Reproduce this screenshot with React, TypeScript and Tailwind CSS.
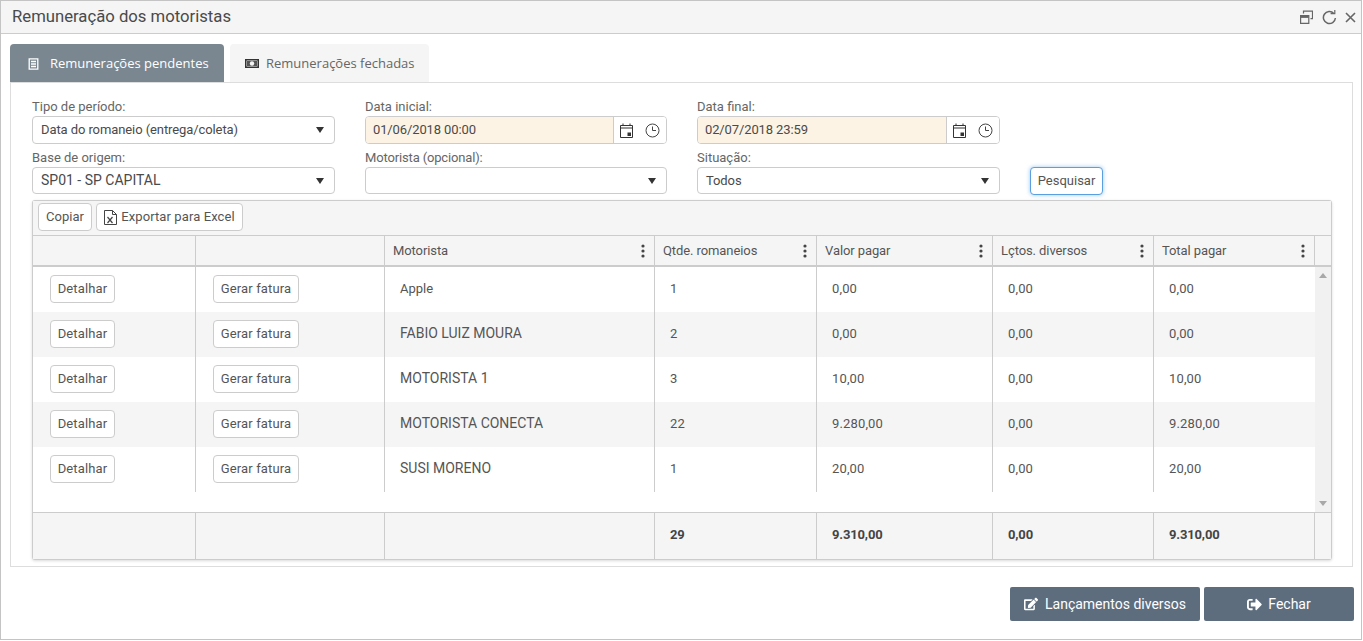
import { FaEdit, FaSignOutAlt } from "react-icons/fa";

const cols = "grid grid-cols-[163px_189px_270px_162px_176px_161px_161px_16px]";
const rowCols = "grid grid-cols-[163px_189px_270px_162px_176px_161px_161px]";
const font = { fontFamily: "Roboto, sans-serif" };

const rows = [
  ["Apple", "1", "0,00", "0,00", "0,00"],
  ["FABIO LUIZ MOURA", "2", "0,00", "0,00", "0,00"],
  ["MOTORISTA 1", "3", "10,00", "0,00", "10,00"],
  ["MOTORISTA CONECTA", "22", "9.280,00", "0,00", "9.280,00"],
  ["SUSI MORENO", "1", "20,00", "0,00", "20,00"],
];

function Arrow() {
  return (
    <svg width="8" height="6" viewBox="0 0 8 6" className="shrink-0">
      <path d="M0 0h8L4 6z" fill="#333" />
    </svg>
  );
}

function Field({ label, w, value, h, track = "text-[13px] tracking-[-0.09px]", labelTrack = "" }: { label: string; w: string; value: string; h: string; track?: string; labelTrack?: string }) {
  return (
    <div className={w}>
      <div className={`h-[18px] text-[13px] leading-[17px] text-[#666] ${labelTrack}`}>{label}</div>
      <div className={`flex ${h} items-center justify-between rounded-[4px] border border-[#ccc] bg-white pl-2 pr-[10px] ${track} text-[#4a4a4a]`}>
        <span>{value}</span>
        <Arrow />
      </div>
    </div>
  );
}

function DateField({ label, value, w }: { label: string; value: string; w: string }) {
  return (
    <div className={w}>
      <div className="h-[18px] text-[13px] leading-[17px] text-[#666]">{label}</div>
      <div className="flex h-[28px] overflow-hidden rounded-[4px] border border-[#ccc] text-[13px] tracking-[-0.12px] text-[#4a4a4a]">
        <div className="flex flex-1 items-center bg-[#fdf3e4] pl-[7px]">{value}</div>
        <div className="flex w-[53px] items-center gap-[11px] border-l border-[#ccc] bg-white pl-[5px]">
          <svg width="15" height="15" viewBox="0 0 15 15" fill="none" stroke="#333">
            <path d="M1.5 2.5h12v12h-12zM1.5 5h12" />
            <path d="M4 .5v2.5M11 .5v2.5" />
            <rect x="8.5" y="9.5" width="3.5" height="3.5" fill="#333" stroke="none" />
          </svg>
          <svg width="15" height="15" viewBox="0 0 15 15" fill="none" stroke="#444" className="mt-[1px]">
            <circle cx="7.5" cy="7.5" r="6.5" />
            <path d="M7.5 3.5v4h3.5" />
          </svg>
        </div>
      </div>
    </div>
  );
}

function SmallButton({ children, className = "" }: { children: React.ReactNode; className?: string }) {
  return (
    <div className={`flex items-center justify-center rounded-[4px] border border-[#ccc] bg-white text-[13px] text-[#555] ${className}`}>
      {children}
    </div>
  );
}

function HeaderCell({ label }: { label: string }) {
  return (
    <div className="flex items-center justify-between border-r border-[#ccc] pl-2 pr-[9px] text-[13px] tracking-[-0.09px] text-[#555]">
      <span>{label}</span>
      <svg width="4" height="14" viewBox="0 0 4 14" fill="#444">
        <circle cx="2" cy="2" r="1.6" />
        <circle cx="2" cy="7" r="1.6" />
        <circle cx="2" cy="12" r="1.6" />
      </svg>
    </div>
  );
}

export default function App() {
  return (
    <div className="flex h-[640px] w-[1362px] flex-col border border-[#c4c4c4] bg-white" style={font}>
      <div className="flex h-[33px] shrink-0 items-center justify-between border-b border-[#ccc] bg-[#f5f5f5] pl-[11px] pr-[5px]">
        <span className="text-[16.7px] text-[#4a4a4a]">Remuneração dos motoristas</span>
        <div className="flex items-center gap-[9px]">
          <svg width="13" height="14" viewBox="0 0 13 14" fill="none" stroke="#666" strokeWidth="1.2">
            <path d="M.6 5.6h8.2v7.8H.6z" />
            <path d="M.6 6.9h8.2" strokeWidth="2" />
            <path d="M3.5 3.4V1.1h9v7.6h-2" />
          </svg>
          <svg width="15" height="16" viewBox="0 0 15 16" fill="none" stroke="#666" strokeWidth="1.5">
            <path d="M11.8 4.4A6 6 0 1 0 13.4 9" />
            <path d="M8.6 4.6h4.2V1" fill="none" strokeWidth="1.2" />
          </svg>
          <svg width="11" height="11" viewBox="0 0 11 11" stroke="#666" strokeWidth="1.6" className="-ml-[1px]">
            <path d="M1 1l9 9M10 1l-9 9" />
          </svg>
        </div>
      </div>

      <div className="flex flex-1 flex-col pl-[9px] pr-[8px] pt-[10px]">
        <div className="flex h-[38px] gap-[6px]" style={{ fontFamily: '"Open Sans", sans-serif' }}>
          <div className="flex w-[214px] items-center gap-[11px] rounded-t-[4px] bg-[#7a8791] pl-[18px] pt-[1px] text-[13px] text-white">
            <svg width="11" height="12" viewBox="0 0 11 12" fill="none" stroke="#fff" strokeWidth="1.3">
              <path d="M1.2.8h8.6v10.4H1.2z" />
              <path d="M3 3.5h5M3 6h5M3 8.5h5" />
            </svg>
            <span>Remunerações pendentes</span>
          </div>
          <div className="flex w-[199px] items-center gap-[7px] rounded-t-[4px] bg-[#f5f5f5] pl-[15px] pt-[1px] text-[13px] text-[#666]">
            <svg width="14" height="9" viewBox="0 0 14 9" fill="none" stroke="#333">
              <rect x=".75" y=".75" width="12.5" height="7.5" strokeWidth="1.5" />
              <rect x="2" y="2" width="10" height="5" fill="#555" stroke="none" />
              <circle cx="7" cy="4.5" r="2.2" fill="#f5f5f5" stroke="none" />
            </svg>
            <span>Remunerações fechadas</span>
          </div>
        </div>

        <div className="flex h-[485px] flex-col border border-[#ddd] px-[21px] pt-[15px]">
          <div className="flex">
            <Field label="Tipo de período:" w="w-[303px]" value="Data do romaneio (entrega/coleta)" h="h-[28px]" />
            <DateField label="Data inicial:" value="01/06/2018 00:00" w="ml-[30px] w-[302px]" />
            <DateField label="Data final:" value="02/07/2018 23:59" w="ml-[30px] w-[303px]" />
          </div>
          <div className="mt-[5px] flex items-start">
            <Field label="Base de origem:" w="w-[303px]" value="SP01 - SP CAPITAL" h="h-[27px]" track="text-[14px] tracking-normal" />
            <Field label="Motorista (opcional):" w="ml-[30px] w-[302px]" value="" h="h-[27px]" labelTrack="tracking-[-0.15px]" />
            <Field label="Situação:" w="ml-[30px] w-[303px]" value="Todos" h="h-[27px]" />
            <div className="ml-[30px] mt-[18px] flex h-[28px] w-[73px] items-center justify-center rounded-[4px] border border-[#5a9fe0] bg-white text-[13px] text-[#555] shadow-[0_0_4px_rgba(90,160,225,0.6)]">
              Pesquisar
            </div>
          </div>

          <div className="mt-[5px] h-[360px] w-[1300px] rounded-[3px] border border-b-2 border-[#ccc] shadow-[0_1px_3px_rgba(0,0,0,0.15)]">
            <div className="flex h-[35px] items-start gap-[4px] border-b border-[#ccc] bg-[#f5f5f5] pl-[5px] pt-[2px]">
              <SmallButton className="h-[28px] w-[54px]">Copiar</SmallButton>
              <SmallButton className="h-[28px] w-[147px] gap-[4px] tracking-[0.1px]">
                <svg width="13" height="15" viewBox="0 0 13 15" fill="none" stroke="#444">
                  <path d="M.5.5h8l4 4v10H.5zM8.5.5v4h4" />
                  <path d="M3.5 7l5 6M8.5 7l-5 6" strokeWidth="1.2" />
                </svg>
                <span>Exportar para Excel</span>
              </SmallButton>
            </div>

            <div className={`${cols} h-[31px] border-b-[2px] border-[#ccc] bg-[#f5f5f5]`}>
              <div className="border-r border-[#ccc]" />
              <div className="border-r border-[#ccc]" />
              <HeaderCell label="Motorista" />
              <HeaderCell label="Qtde. romaneios" />
              <HeaderCell label="Valor pagar" />
              <HeaderCell label="Lçtos. diversos" />
              <HeaderCell label="Total pagar" />
              <div />
            </div>

            <div className="flex h-[246px] border-b border-[#ccc]">
              <div className="w-[1282px]">
                {rows.map((r, i) => (
                  <div key={r[0]} className={`${rowCols} h-[45px] ${i % 2 ? "bg-[#f5f5f5]" : "bg-white"} text-[13px] tracking-[0.15px] text-[#555]`}>
                    <div className="flex items-center border-r border-[#ccc] pb-[2px] pl-[17px]">
                      <SmallButton className="h-[28px] w-[65px]">Detalhar</SmallButton>
                    </div>
                    <div className="flex items-center border-r border-[#ccc] pb-[2px] pl-[17px]">
                      <SmallButton className="h-[28px] w-[86px]">Gerar fatura</SmallButton>
                    </div>
                    <div className={`flex items-center border-r border-[#ccc] pb-[2px] pl-[15px] ${i === 0 ? "tracking-normal" : "text-[14px] tracking-normal"}`}>{r[0]}</div>
                    <div className="flex items-center border-r border-[#ccc] pb-[2px] pl-[15px]">{r[1]}</div>
                    <div className="flex items-center border-r border-[#ccc] pb-[2px] pl-[15px]">{r[2]}</div>
                    <div className="flex items-center border-r border-[#ccc] pb-[2px] pl-[15px]">{r[3]}</div>
                    <div className="flex items-center pb-[2px] pl-[15px]">{r[4]}</div>
                  </div>
                ))}
              </div>
              <div className="flex w-[16px] flex-col items-center justify-between bg-[#f1f1f1] py-[6px]">
                <svg width="8" height="5" viewBox="0 0 8 5"><path d="M4 0l4 5H0z" fill="#a8a8a8" /></svg>
                <svg width="8" height="5" viewBox="0 0 8 5"><path d="M0 0h8L4 5z" fill="#a8a8a8" /></svg>
              </div>
            </div>

            <div className={`${cols} h-[46px] bg-[#f5f5f5] text-[13px] font-bold tracking-[-0.15px] text-[#444]`}>
              <div className="border-r border-[#ccc]" />
              <div className="border-r border-[#ccc]" />
              <div className="border-r border-[#ccc]" />
              <div className="flex items-center border-r border-[#ccc] pb-[2px] pl-[15px]">29</div>
              <div className="flex items-center border-r border-[#ccc] pb-[2px] pl-[15px]">9.310,00</div>
              <div className="flex items-center border-r border-[#ccc] pb-[2px] pl-[15px]">0,00</div>
              <div className="flex items-center border-r border-[#ccc] pb-[2px] pl-[15px]">9.310,00</div>
              <div />
            </div>
          </div>
        </div>

        <div className="-mr-[1px] mt-[20px] flex justify-end gap-[4px]">
          <div className="flex h-[34px] w-[190px] items-center justify-center gap-[7px] rounded-[2px] bg-[#5e6d7e] text-[14px] text-white">
            <FaEdit size={14} />
            <span>Lançamentos diversos</span>
          </div>
          <div className="flex h-[34px] w-[150px] items-center justify-center gap-[6px] rounded-[2px] bg-[#5e6d7e] text-[14px] text-white">
            <FaSignOutAlt size={15} />
            <span>Fechar</span>
          </div>
        </div>
      </div>
    </div>
  );
}
